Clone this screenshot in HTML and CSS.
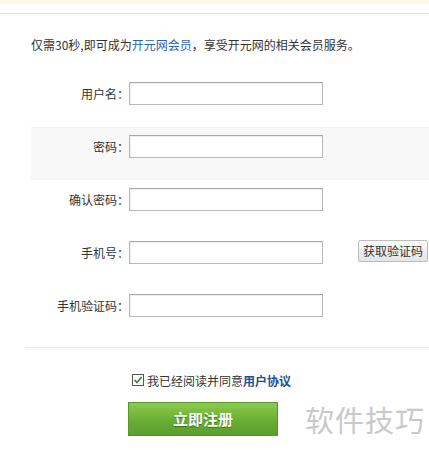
FILE: index.html
```html
<!DOCTYPE html>
<html>
<head>
<meta charset="utf-8">
<link rel="stylesheet" href="styles.css">
</head>
<body>
<div class="page">
  <div class="topbar"></div>
  <div class="topline"></div>
  <p class="intro">仅需30秒,即可成为<span class="link">开元网会员</span>，享受开元网的相关会员服务。</p>
  <div class="form">
    <div class="row"><label class="lbl">用户名：</label><span class="input"></span></div>
    <div class="row shaded"><label class="lbl">密码：</label><span class="input"></span></div>
    <div class="row"><label class="lbl">确认密码：</label><span class="input"></span></div>
    <div class="row"><label class="lbl">手机号：</label><span class="input"></span><span class="code-btn">获取验证码</span></div>
    <div class="row"><label class="lbl">手机验证码：</label><span class="input"></span></div>
  </div>
  <div class="sep"></div>
  <div class="agree">
    <span class="check"><svg width="10" height="10" viewBox="0 0 10 10"><path d="M1.5 5 L4 7.5 L8.5 2" fill="none" stroke="#3a7a3a" stroke-width="1.6"/></svg></span>
    <span>我已经阅读并同意<b class="proto">用户协议</b></span>
  </div>
  <div class="submit">立即注册</div>
  <div class="watermark">软件技巧</div>
</div>
</body>
</html>
```
FILE: styles.css
```css
html, body { margin: 0; padding: 0; background: #fff; }
body { font-family: "Noto Sans CJK SC", "Noto Sans", sans-serif; font-size: 12px; color: #333; }
.page { position: relative; width: 429px; height: 450px; overflow: hidden; }
.topbar { height: 4px; background: #fcf8e6; }
.topline { margin-top: 9px; height: 1px; background: #e2e2e2; }
.intro { margin: 23px 0 0 31px; line-height: 16px; height: 16px; }
.link { color: #2a64a8; }
.form { margin-top: 21px; margin-left: 31px; }
.row { height: 53px; display: flex; align-items: flex-start; padding-top: 8px; box-sizing: border-box; }
.row.shaded { background: #f8f8f8; border-top: 1px solid #f1f1f1; border-bottom: 1px solid #f1f1f1; padding-top: 7px; }
.lbl { width: 98px; text-align: right; line-height: 23px; height: 23px; color: #333; }
.input { width: 192px; height: 21px; border: 1px solid #b8b8b8; border-top-color: #a8a8a8; background: #fff; box-shadow: inset 1px 1px 1px #eee; }
.code-btn { margin-left: 35px; width: 68px; height: 20px; border: 1px solid #bdbdbd; border-radius: 2px; background: linear-gradient(#fbfbfb, #e4e4e4); text-align: center; line-height: 20px; color: #333; margin-top: -1px; }
.sep { margin: 8px 0 0 25px; height: 1px; background: #e4e4e4; box-shadow: 0 2px 0 #f3f3f3; }
.agree { margin: 25px 0 0 132px; display: flex; align-items: center; gap: 3px; height: 14px; }
.check { width: 10px; height: 10px; border: 1px solid #555; background: #fff; display: flex; }
.proto { color: #1a5296; font-weight: bold; }
.submit { margin: 15px 0 0 128px; width: 148px; height: 32px; border: 1px solid #5b9230; background: linear-gradient(#8acb4c, #6aae35 55%, #5c9e2b); color: #fff; font-weight: bold; font-size: 15px; text-align: center; line-height: 32px; text-shadow: 0 1px 1px #3d6d1a; }
.watermark { position: absolute; left: 305px; top: 398px; font-size: 29px; color: #c9c9c9; letter-spacing: 1px; }
```
